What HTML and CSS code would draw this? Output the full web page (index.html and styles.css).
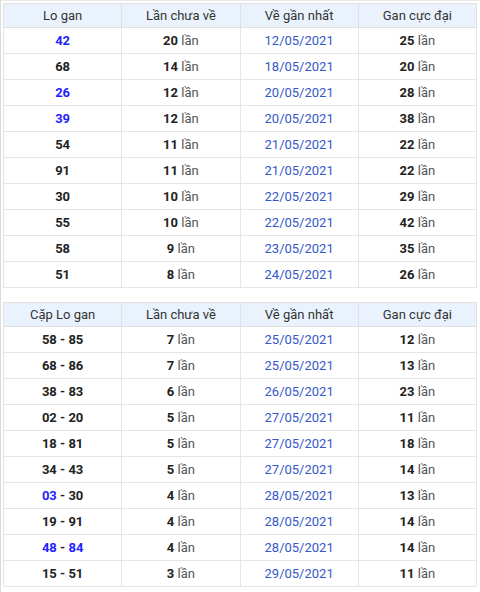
FILE: index.html
```html
<!DOCTYPE html>
<html lang="vi">
<head>
<meta charset="utf-8">
<link rel="stylesheet" href="styles.css">
</head>
<body>
<div class="wrap">
<table class="tbl">
<thead><tr><th>Lo gan</th><th>Lần chưa về</th><th>Về gần nhất</th><th>Gan cực đại</th></tr></thead>
<tbody>
<tr><td class="num"><span class="hl">42</span></td><td><b>20</b> lần</td><td class="date">12/05/2021</td><td><b>25</b> lần</td></tr>
<tr><td class="num">68</td><td><b>14</b> lần</td><td class="date">18/05/2021</td><td><b>20</b> lần</td></tr>
<tr><td class="num"><span class="hl">26</span></td><td><b>12</b> lần</td><td class="date">20/05/2021</td><td><b>28</b> lần</td></tr>
<tr><td class="num"><span class="hl">39</span></td><td><b>12</b> lần</td><td class="date">20/05/2021</td><td><b>38</b> lần</td></tr>
<tr><td class="num">54</td><td><b>11</b> lần</td><td class="date">21/05/2021</td><td><b>22</b> lần</td></tr>
<tr><td class="num">91</td><td><b>11</b> lần</td><td class="date">21/05/2021</td><td><b>22</b> lần</td></tr>
<tr><td class="num">30</td><td><b>10</b> lần</td><td class="date">22/05/2021</td><td><b>29</b> lần</td></tr>
<tr><td class="num">55</td><td><b>10</b> lần</td><td class="date">22/05/2021</td><td><b>42</b> lần</td></tr>
<tr><td class="num">58</td><td><b>9</b> lần</td><td class="date">23/05/2021</td><td><b>35</b> lần</td></tr>
<tr><td class="num">51</td><td><b>8</b> lần</td><td class="date">24/05/2021</td><td><b>26</b> lần</td></tr>
</tbody>
</table>
<table class="tbl second">
<thead><tr><th>Cặp Lo gan</th><th>Lần chưa về</th><th>Về gần nhất</th><th>Gan cực đại</th></tr></thead>
<tbody>
<tr><td class="num">58 - 85</td><td><b>7</b> lần</td><td class="date">25/05/2021</td><td><b>12</b> lần</td></tr>
<tr><td class="num">68 - 86</td><td><b>7</b> lần</td><td class="date">25/05/2021</td><td><b>13</b> lần</td></tr>
<tr><td class="num">38 - 83</td><td><b>6</b> lần</td><td class="date">26/05/2021</td><td><b>23</b> lần</td></tr>
<tr><td class="num">02 - 20</td><td><b>5</b> lần</td><td class="date">27/05/2021</td><td><b>11</b> lần</td></tr>
<tr><td class="num">18 - 81</td><td><b>5</b> lần</td><td class="date">27/05/2021</td><td><b>18</b> lần</td></tr>
<tr><td class="num">34 - 43</td><td><b>5</b> lần</td><td class="date">27/05/2021</td><td><b>14</b> lần</td></tr>
<tr><td class="num"><span class="hl">03</span> - 30</td><td><b>4</b> lần</td><td class="date">28/05/2021</td><td><b>13</b> lần</td></tr>
<tr><td class="num">19 - 91</td><td><b>4</b> lần</td><td class="date">28/05/2021</td><td><b>14</b> lần</td></tr>
<tr><td class="num"><span class="hl">48</span> - <span class="hl">84</span></td><td><b>4</b> lần</td><td class="date">28/05/2021</td><td><b>14</b> lần</td></tr>
<tr><td class="num">15 - 51</td><td><b>3</b> lần</td><td class="date">29/05/2021</td><td><b>11</b> lần</td></tr>
</tbody>
</table>
</div>
</body>
</html>
```
FILE: styles.css
```css
html, body {
  margin: 0;
  padding: 0;
  background: #ffffff;
}
body {
  font-family: Roboto, "Noto Sans", Arial, sans-serif;
  font-size: 13px;
  color: #222;
}
.wrap {
  border-left: 1px solid #dcdcdc;
  border-top: 1px solid #e8e8e8;
  padding: 2px 0 0 2px;
  height: 600px;
}
.tbl {
  width: 474px;
  border-collapse: collapse;
  table-layout: fixed;
  border: 1px solid #e0e0e0;
}
.tbl.second {
  margin-top: 14px;
}
.tbl th {
  background: #eaf3fd;
  font-weight: 400;
  color: #333;
  height: 23px;
  padding: 0;
  text-align: center;
  border: 1px solid #e0e0e0;
}
.tbl td {
  height: 25px;
  padding: 0;
  text-align: center;
  border: 1px solid #e6e6e6;
  color: #555;
}
.tbl td b {
  color: #222;
  font-weight: 700;
}
.tbl td.num {
  font-weight: 700;
  color: #222;
}
.tbl .hl {
  color: #1f1fff;
}
.tbl td.date {
  color: #3557c9;
}
```
